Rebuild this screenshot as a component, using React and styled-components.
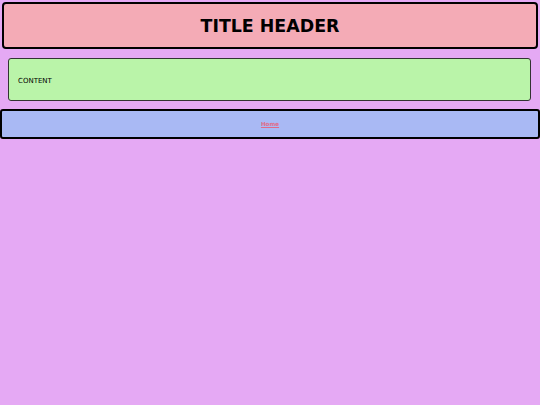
import React from "react";
import styled, { createGlobalStyle } from "styled-components";

const GlobalStyle = createGlobalStyle`
  html, body {
    margin: 0;
    padding: 0;
    background: #e5a9f4;
    font-family: "DejaVu Sans", Verdana, sans-serif;
  }
  * {
    box-sizing: border-box;
  }
`;

const Page = styled.div`
  width: 540px;
  min-height: 405px;
  padding-top: 2px;
  display: flex;
  flex-direction: column;
`;

const Header = styled.header`
  margin: 0 2px;
  height: 47px;
  background: #f4abb6;
  border: 2px solid #000;
  border-radius: 4px;
  display: flex;
  align-items: center;
  justify-content: center;
`;

const Title = styled.h1`
  margin: 0;
  font-size: 17.4px;
  font-weight: 700;
  color: #000;
`;

const Content = styled.main`
  margin: 9px 9px 0 8px;
  height: 43px;
  background: #baf4a9;
  border: 1px solid #333;
  border-radius: 3px;
  display: flex;
  align-items: center;
  padding: 2px 0 0 9px;
  font-size: 7px;
  font-weight: 400;
  color: #000;
`;

const Footer = styled.footer`
  margin-top: 8px;
  height: 30px;
  background: #a9b9f4;
  border: 2px solid #000;
  border-radius: 3px;
  display: flex;
  align-items: center;
  justify-content: center;
`;

const FooterLink = styled.a`
  font-size: 5.6px;
  font-weight: 700;
  color: #e06a86;
  text-decoration: underline;
`;

export default function App() {
  return (
    <>
      <GlobalStyle />
      <Page>
        <Header>
          <Title>TITLE HEADER</Title>
        </Header>
        <Content>CONTENT</Content>
        <Footer>
          <FooterLink href="#">Home</FooterLink>
        </Footer>
      </Page>
    </>
  );
}
